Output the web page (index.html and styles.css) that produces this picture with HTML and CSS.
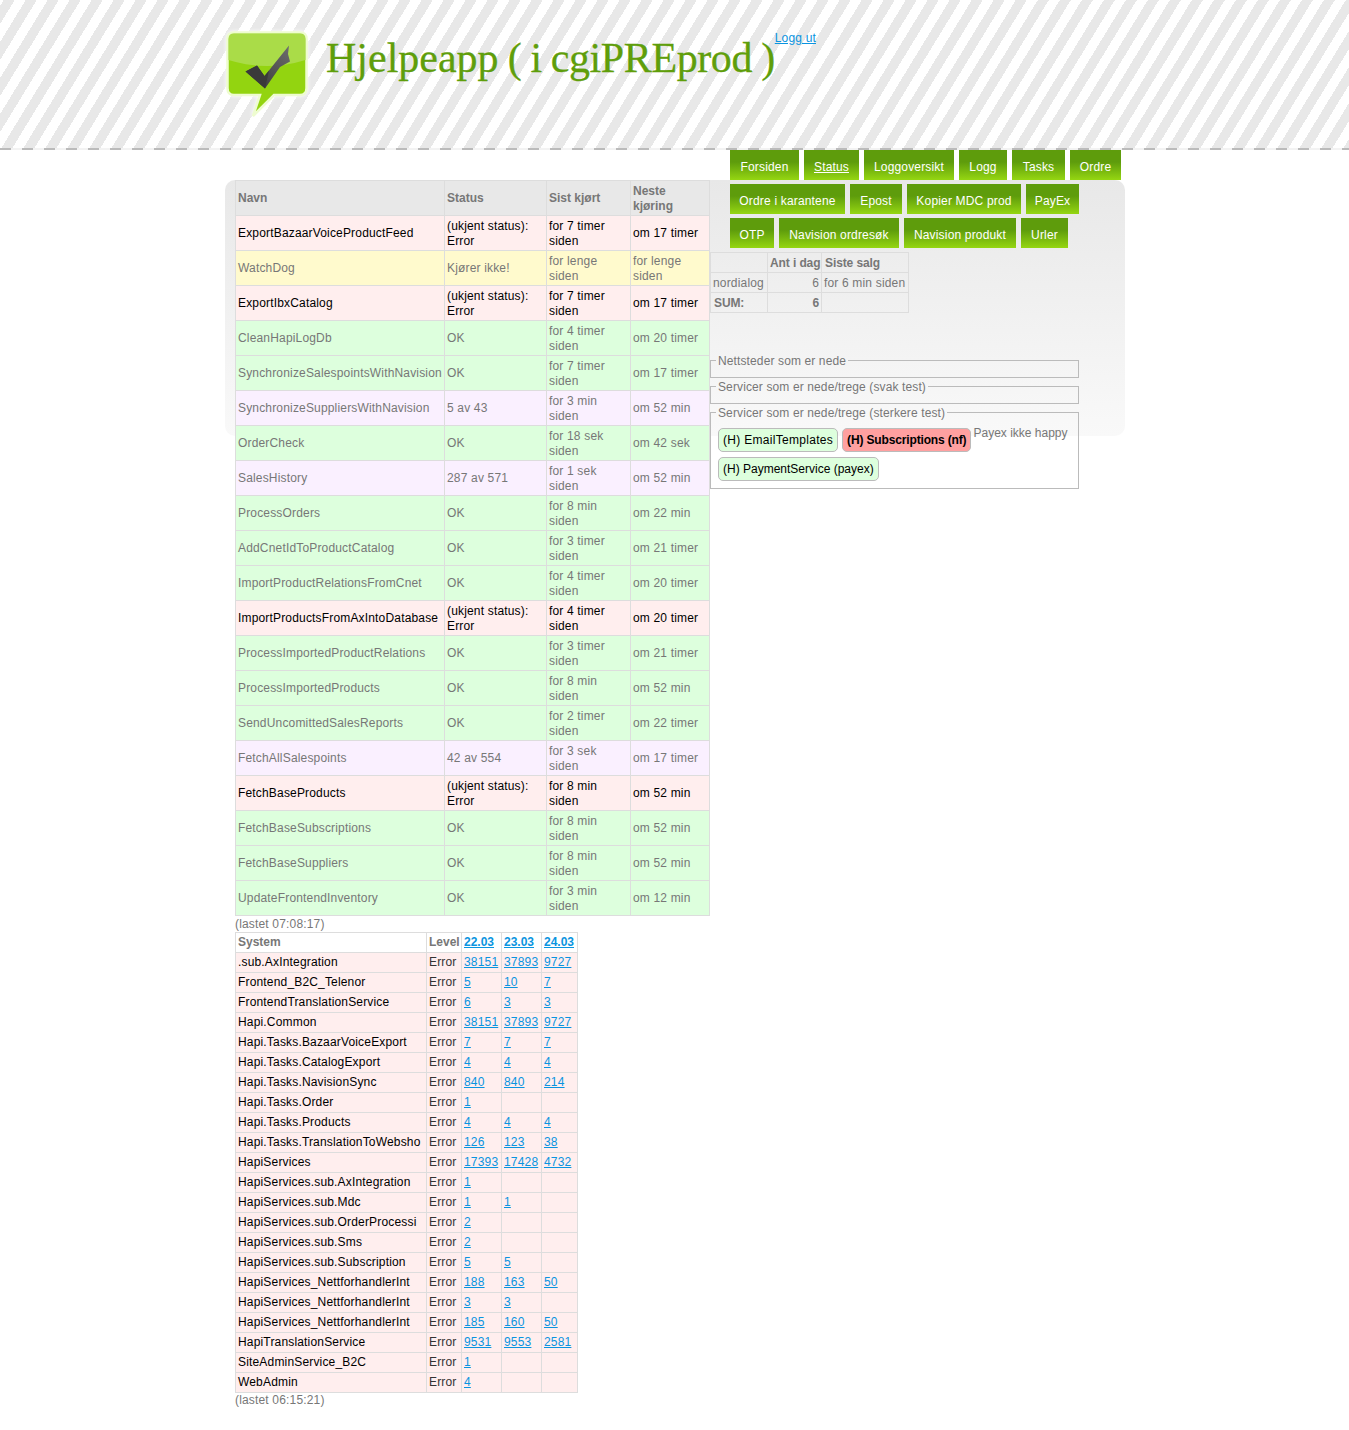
FILE: index.html
```html
<!DOCTYPE html>
<html lang="en">

<head>
    <meta charset="UTF-8">
    <meta name="viewport" content="width=device-width, initial-scale=1.0">
    <title>Hjelpeapp</title>
    <link rel="stylesheet" href="styles.css">
</head>

<body>
    <div class="header">
        <div class="container header-inner">
            <svg class="logo" viewBox="0 0 100 95" width="100" height="95">
                <defs>
                    <linearGradient id="checkfade" x1="0" y1="1" x2="1" y2="0">
                        <stop offset="0" stop-color="#333"/>
                        <stop offset="1" stop-color="#6e6e6e"/>
                    </linearGradient>
                </defs>
                <path d="M14 7.500H80Q86.500 7.500 86.500 14V63Q86.500 70 80 70H54L33 91L40 70H14Q7.500 70 7.500 63V14Q7.500 7.500 14 7.500Z" fill="#93d410" stroke="#eefcd0" stroke-width="2.500"/>
                <path d="M14 8.500H80Q85.500 8.500 85.500 14V35Q47 47 8.500 35V14Q8.500 8.500 14 8.500Z" fill="#aadc48"/>
                <path d="M25.500 46.500L37 40.500L44.500 51L69 20.500L68 29L70 36.500L60 42L45 63.500Z" fill="url(#checkfade)"/>
                <path d="M25.500 46.500L37 40.500L44.500 51L49 45.500L45 63.500Z" fill="#3a3a3a"/>
            </svg>
            <h1 class="site-title"><span class="app-name">Hjelpeapp</span> ( i cgiPREprod )</h1>
            <a class="logout" href="#">Logg ut</a>
        </div>
    </div>

    <div class="container page">
        <div class="left">
            <table class="jobs">
                <colgroup>
                    <col class="c-name">
                    <col class="c-status">
                    <col class="c-last">
                    <col class="c-next">
                </colgroup>
                <tr class="head">
                    <th>Navn</th>
                    <th>Status</th>
                    <th>Sist kjørt</th>
                    <th>Neste kjøring</th>
                </tr>
                <tr class="err"><td>ExportBazaarVoiceProductFeed</td><td>(ukjent status): Error</td><td>for 7 timer siden</td><td>om 17 timer</td></tr>
                <tr class="warn"><td>WatchDog</td><td>Kjører ikke!</td><td>for lenge siden</td><td>for lenge siden</td></tr>
                <tr class="err"><td>ExportIbxCatalog</td><td>(ukjent status): Error</td><td>for 7 timer siden</td><td>om 17 timer</td></tr>
                <tr class="ok"><td>CleanHapiLogDb</td><td>OK</td><td>for 4 timer siden</td><td>om 20 timer</td></tr>
                <tr class="ok"><td>SynchronizeSalespointsWithNavision</td><td>OK</td><td>for 7 timer siden</td><td>om 17 timer</td></tr>
                <tr class="part"><td>SynchronizeSuppliersWithNavision</td><td>5 av 43</td><td>for 3 min siden</td><td>om 52 min</td></tr>
                <tr class="ok"><td>OrderCheck</td><td>OK</td><td>for 18 sek siden</td><td>om 42 sek</td></tr>
                <tr class="part"><td>SalesHistory</td><td>287 av 571</td><td>for 1 sek siden</td><td>om 52 min</td></tr>
                <tr class="ok"><td>ProcessOrders</td><td>OK</td><td>for 8 min siden</td><td>om 22 min</td></tr>
                <tr class="ok"><td>AddCnetIdToProductCatalog</td><td>OK</td><td>for 3 timer siden</td><td>om 21 timer</td></tr>
                <tr class="ok"><td>ImportProductRelationsFromCnet</td><td>OK</td><td>for 4 timer siden</td><td>om 20 timer</td></tr>
                <tr class="err"><td>ImportProductsFromAxIntoDatabase</td><td>(ukjent status): Error</td><td>for 4 timer siden</td><td>om 20 timer</td></tr>
                <tr class="ok"><td>ProcessImportedProductRelations</td><td>OK</td><td>for 3 timer siden</td><td>om 21 timer</td></tr>
                <tr class="ok"><td>ProcessImportedProducts</td><td>OK</td><td>for 8 min siden</td><td>om 52 min</td></tr>
                <tr class="ok"><td>SendUncomittedSalesReports</td><td>OK</td><td>for 2 timer siden</td><td>om 22 timer</td></tr>
                <tr class="part"><td>FetchAllSalespoints</td><td>42 av 554</td><td>for 3 sek siden</td><td>om 17 timer</td></tr>
                <tr class="err"><td>FetchBaseProducts</td><td>(ukjent status): Error</td><td>for 8 min siden</td><td>om 52 min</td></tr>
                <tr class="ok"><td>FetchBaseSubscriptions</td><td>OK</td><td>for 8 min siden</td><td>om 52 min</td></tr>
                <tr class="ok"><td>FetchBaseSuppliers</td><td>OK</td><td>for 8 min siden</td><td>om 52 min</td></tr>
                <tr class="ok"><td>UpdateFrontendInventory</td><td>OK</td><td>for 3 min siden</td><td>om 12 min</td></tr>
            </table>
            <p class="loaded">(lastet 07:08:17)</p>

            <table class="logs">
                <colgroup>
                    <col class="c-system">
                    <col class="c-level">
                    <col class="c-day">
                    <col class="c-day">
                    <col class="c-day-last">
                </colgroup>
                <tr>
                    <th>System</th>
                    <th>Level</th>
                    <th><a href="#">22.03</a></th>
                    <th><a href="#">23.03</a></th>
                    <th><a href="#">24.03</a></th>
                </tr>
                <tr><td>.sub.AxIntegration</td><td>Error</td><td><a href="#">38151</a></td><td><a href="#">37893</a></td><td><a href="#">9727</a></td></tr>
                <tr><td>Frontend_B2C_Telenor</td><td>Error</td><td><a href="#">5</a></td><td><a href="#">10</a></td><td><a href="#">7</a></td></tr>
                <tr><td>FrontendTranslationService</td><td>Error</td><td><a href="#">6</a></td><td><a href="#">3</a></td><td><a href="#">3</a></td></tr>
                <tr><td>Hapi.Common</td><td>Error</td><td><a href="#">38151</a></td><td><a href="#">37893</a></td><td><a href="#">9727</a></td></tr>
                <tr><td>Hapi.Tasks.BazaarVoiceExport</td><td>Error</td><td><a href="#">7</a></td><td><a href="#">7</a></td><td><a href="#">7</a></td></tr>
                <tr><td>Hapi.Tasks.CatalogExport</td><td>Error</td><td><a href="#">4</a></td><td><a href="#">4</a></td><td><a href="#">4</a></td></tr>
                <tr><td>Hapi.Tasks.NavisionSync</td><td>Error</td><td><a href="#">840</a></td><td><a href="#">840</a></td><td><a href="#">214</a></td></tr>
                <tr><td>Hapi.Tasks.Order</td><td>Error</td><td><a href="#">1</a></td><td></td><td></td></tr>
                <tr><td>Hapi.Tasks.Products</td><td>Error</td><td><a href="#">4</a></td><td><a href="#">4</a></td><td><a href="#">4</a></td></tr>
                <tr><td>Hapi.Tasks.TranslationToWebsho</td><td>Error</td><td><a href="#">126</a></td><td><a href="#">123</a></td><td><a href="#">38</a></td></tr>
                <tr><td>HapiServices</td><td>Error</td><td><a href="#">17393</a></td><td><a href="#">17428</a></td><td><a href="#">4732</a></td></tr>
                <tr><td>HapiServices.sub.AxIntegration</td><td>Error</td><td><a href="#">1</a></td><td></td><td></td></tr>
                <tr><td>HapiServices.sub.Mdc</td><td>Error</td><td><a href="#">1</a></td><td><a href="#">1</a></td><td></td></tr>
                <tr><td>HapiServices.sub.OrderProcessi</td><td>Error</td><td><a href="#">2</a></td><td></td><td></td></tr>
                <tr><td>HapiServices.sub.Sms</td><td>Error</td><td><a href="#">2</a></td><td></td><td></td></tr>
                <tr><td>HapiServices.sub.Subscription</td><td>Error</td><td><a href="#">5</a></td><td><a href="#">5</a></td><td></td></tr>
                <tr><td>HapiServices_NettforhandlerInt</td><td>Error</td><td><a href="#">188</a></td><td><a href="#">163</a></td><td><a href="#">50</a></td></tr>
                <tr><td>HapiServices_NettforhandlerInt</td><td>Error</td><td><a href="#">3</a></td><td><a href="#">3</a></td><td></td></tr>
                <tr><td>HapiServices_NettforhandlerInt</td><td>Error</td><td><a href="#">185</a></td><td><a href="#">160</a></td><td><a href="#">50</a></td></tr>
                <tr><td>HapiTranslationService</td><td>Error</td><td><a href="#">9531</a></td><td><a href="#">9553</a></td><td><a href="#">2581</a></td></tr>
                <tr><td>SiteAdminService_B2C</td><td>Error</td><td><a href="#">1</a></td><td></td><td></td></tr>
                <tr><td>WebAdmin</td><td>Error</td><td><a href="#">4</a></td><td></td><td></td></tr>
            </table>
            <p class="loaded">(lastet 06:15:21)</p>
        </div>

        <div class="right">
            <ul class="menu">
                <li><a href="#">Forsiden</a></li>
                <li><a class="current" href="#">Status</a></li>
                <li><a href="#">Loggoversikt</a></li>
                <li><a href="#">Logg</a></li>
                <li><a href="#">Tasks</a></li>
                <li><a href="#">Ordre</a></li>
                <li><a href="#">Ordre i karantene</a></li>
                <li><a href="#">Epost</a></li>
                <li><a href="#">Kopier MDC prod</a></li>
                <li><a href="#">PayEx</a></li>
                <li><a href="#">OTP</a></li>
                <li><a href="#">Navision ordresøk</a></li>
                <li><a href="#">Navision produkt</a></li>
                <li><a href="#">Urler</a></li>
            </ul>

            <table class="sales">
                <colgroup>
                    <col class="c-shop">
                    <col class="c-count">
                    <col class="c-sale">
                </colgroup>
                <tr><th></th><th>Ant i dag</th><th>Siste salg</th></tr>
                <tr><td>nordialog</td><td class="num">6</td><td>for 6 min siden</td></tr>
                <tr><th>SUM:</th><th class="num">6</th><td></td></tr>
            </table>

            <fieldset class="box first">
                <legend>Nettsteder som er nede</legend>
            </fieldset>
            <fieldset class="box">
                <legend>Servicer som er nede/trege (svak test)</legend>
            </fieldset>
            <fieldset class="box filled">
                <legend>Servicer som er nede/trege (sterkere test)</legend>
                <div class="services">
                    <span class="service wide">(H) EmailTemplates</span>
                    <span class="service down">(H) Subscriptions (nf)</span>
                    <span class="note">Payex ikke happy</span>
                    <span class="service">(H) PaymentService (payex)</span>
                </div>
            </fieldset>
        </div>
    </div>
</body>

</html>
```

FILE: styles.css
```css
* {
    box-sizing: border-box;
}

body {
    margin: 0;
    font-family: "Liberation Sans", Arial, sans-serif;
    font-size: 12px;
    line-height: 15px;
    letter-spacing: 0.17px;
    color: #777;
    background: #fff;
}

a {
    color: #0a94e0;
}

.container {
    width: 900px;
    margin-left: 225px;
}

/* header */
.header {
    height: 152px;
    background:
        repeating-linear-gradient(90deg, #bbb 0, #bbb 11px, #f3f3f3 11px, #f3f3f3 22px) 0 148px / 100% 2px no-repeat,
        linear-gradient(#fff, #fff) 0 150px / 100% 2px no-repeat,
        repeating-linear-gradient(121.4deg, #fff 0, #fff 3.16px, #e8e8e8 3.16px, #e8e8e8 12.55px, #fff 12.55px, #fff 18.78px);
}

.header-inner {
    display: flex;
    align-items: flex-start;
}

.logo {
    flex: none;
    margin: 25px 0 0 -5px;
    filter: drop-shadow(0 0 2px #fff);
}

.site-title {
    margin: 30px 0 0 6px;
    font-family: "Liberation Serif", "Times New Roman", serif;
    font-size: 42px;
    line-height: 56px;
    font-weight: normal;
    letter-spacing: -0.4px;
    word-spacing: -1px;
    color: #5f9e0b;
    white-space: nowrap;
    -webkit-text-stroke: 0.3px #5f9e0b;
}

.app-name {
    letter-spacing: 0;
}

.logout {
    margin-top: 31px;
}

/* page layout */
.page {
    position: relative;
    display: flex;
    margin-top: -2px;
    padding: 30px 0 0 10px;
}

.page::before {
    content: "";
    position: absolute;
    z-index: -1;
    top: 30px;
    left: 0;
    width: 100%;
    height: 256px;
    border-radius: 10px;
    background: linear-gradient(#e8e8e8, #f9f9f9);
}

.left {
    width: 475px;
    flex: none;
}

.right {
    width: 369px;
    flex: none;
    margin-top: -30px;
}

.loaded {
    margin: 0;
    padding-top: 1px;
}

.logs + .loaded {
    padding-top: 0;
}

/* tables */
table {
    border-collapse: collapse;
    table-layout: fixed;
}

th,
td {
    border: 1px solid #ddd;
    padding: 2.5px 5px 1.5px 2px;
    text-align: left;
    vertical-align: middle;
}

th {
    letter-spacing: 0;
}

.jobs {
    width: 474px;
}

.c-name { width: 209px; }
.c-status { width: 102px; }
.c-last { width: 84px; }
.c-next { width: 79px; }

.jobs th {
    height: 35px;
    background: #e8e8e8;
}

.jobs td {
    height: 35px;
}

.err td { background: #ffeeee; color: #000; }
.warn td { background: #fffacd; }
.ok td { background: #ddffdd; }
.part td { background: #faf0ff; }

.logs {
    width: 343px;
}

.c-system { width: 191px; }
.c-level { width: 35px; }
.c-day { width: 40px; }
.c-day-last { width: 36px; }

.logs td,
.logs th {
    height: 20px;
    padding: 0 2px;
    white-space: nowrap;
    overflow: hidden;
}

.logs td {
    background: #ffeeee;
    color: #000;
}

.logs td:nth-child(2) {
    color: #333;
}

.sales {
    width: 198px;
    margin-top: 4px;
}

.c-shop { width: 57px; }
.c-count { width: 54px; }
.c-sale { width: 87px; }

.sales td,
.sales th {
    height: 20px;
    padding: 1px 2px 0;
    white-space: nowrap;
}

.sales th {
    padding-left: 3px;
    letter-spacing: -0.1px;
}

.sales th:nth-child(2) {
    padding-left: 2px;
}

.sales .num {
    text-align: right;
}

/* menu */
.menu {
    list-style: none;
    display: flex;
    flex-wrap: wrap;
    gap: 4px 5px;
    width: 395px;
    margin: 0 0 0 20px;
    padding: 0;
}

.menu a {
    display: block;
    height: 30px;
    line-height: 34px;
    text-align: center;
    white-space: nowrap;
    color: #fff;
    text-decoration: none;
    background: linear-gradient(#5e9c0c 40%, #95d612);
}

.menu a.current {
    text-decoration: underline;
}

.menu li:nth-child(1) { width: 69px; }
.menu li:nth-child(2) { width: 55px; }
.menu li:nth-child(3) { width: 90px; }
.menu li:nth-child(4) { width: 48px; }
.menu li:nth-child(5) { width: 53px; }
.menu li:nth-child(6) { width: 51px; }
.menu li:nth-child(7) { width: 115px; }
.menu li:nth-child(8) { width: 52px; }
.menu li:nth-child(9) { width: 114px; }
.menu li:nth-child(10) { width: 53px; }
.menu li:nth-child(11) { width: 44px; }
.menu li:nth-child(12) { width: 120px; }
.menu li:nth-child(13) { width: 112px; }
.menu li:nth-child(14) { width: 47px; }

/* status boxes */
.box {
    margin: 0;
    padding: 0 5px 8px;
    border: 1px solid #bbb;
    min-width: 0;
}

.first {
    margin-top: 39px;
}

.box legend {
    padding: 2px 2px 0;
    letter-spacing: 0.12px;
}

.filled {
    padding-bottom: 7px;
}

.services {
    display: flex;
    flex-wrap: wrap;
    gap: 5px 4px;
    padding: 7px 0 0 2px;
}

.service {
    height: 24px;
    padding: 0 4px;
    line-height: 22px;
    letter-spacing: 0;
    border: 1px solid #bbb;
    border-radius: 5px;
    background: #ddffdd;
    color: #000;
}

.service.wide {
    letter-spacing: 0.3px;
}

.service.down {
    background: #ffa0a0;
    font-weight: bold;
    letter-spacing: -0.15px;
}

.note {
    margin: -2px 0 0 -2px;
    letter-spacing: 0;
}
```
